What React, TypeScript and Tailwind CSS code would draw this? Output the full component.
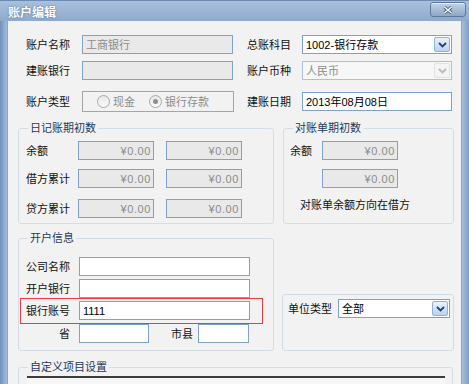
import React from 'react';

const Chevron = ({ color }: { color: string }) => (
  <svg width="9" height="6" viewBox="0 0 9 6">
    <path d="M1 1 L4.5 4.5 L8 1" fill="none" stroke={color} strokeWidth="1.8" />
  </svg>
);

const Field = ({
  w,
  gray,
  right,
  dim,
  children,
}: {
  w: string;
  gray?: boolean;
  right?: boolean;
  dim?: boolean;
  children?: React.ReactNode;
}) => (
  <div
    className={`${w} h-[19px] border border-[#7fa2cd] flex items-center px-[3px] ${
      gray ? 'bg-[#e9e9e9]' : 'bg-white'
    } ${right ? 'justify-end pr-[2px]' : ''} ${dim ? 'text-[#8c8c8c]' : 'text-black'}`}
  >
    {children}
  </div>
);

const Select = ({ w, value, disabled }: { w: string; value: string; disabled?: boolean }) => (
  <div
    className={`${w} h-[19px] border flex items-stretch ${
      disabled ? 'border-[#a9c0de] bg-[#f7f7f7] text-[#8c8c8c]' : 'border-[#7fa2cd] bg-white text-black'
    }`}
  >
    <div className="flex-1 flex items-center pl-[3px]">{value}</div>
    <div
      className={`w-[16px] m-[1px] rounded-[2px] border flex items-center justify-center ${
        disabled
          ? 'border-[#e2e2e2] bg-[#f4f4f4]'
          : 'border-[#8db1e2] bg-gradient-to-b from-[#eaf2fc] to-[#bcd2f1]'
      }`}
    >
      <Chevron color={disabled ? '#b9b9b9' : '#23426f'} />
    </div>
  </div>
);

const Radio = ({ checked, label }: { checked?: boolean; label: string }) => (
  <div className="flex items-center gap-[3px] text-[#8d8d8d]">
    <div className="w-[13px] h-[13px] rounded-full border border-[#a8a8a8] bg-gradient-to-b from-[#e6e6e6] to-[#fbfbfb] flex items-center justify-center">
      {checked && <div className="w-[5px] h-[5px] rounded-full bg-[#8e8e8e]" />}
    </div>
    <span>{label}</span>
  </div>
);

const Legend = ({ children }: { children: React.ReactNode }) => (
  <div className="absolute -top-[8px] left-[9px] px-[2px] bg-[#f2f2f2] leading-[14px] text-[#1e395b]">
    {children}
  </div>
);

const Money = () => <Field w="w-[76px]" gray right dim><span className="tracking-[0.6px]">¥0.00</span></Field>;

const App = () => {
  return (
    <div className="w-[469px] h-[384px] overflow-hidden flex flex-col bg-[#9fb7d5] font-['Liberation_Sans','Noto_Sans_CJK_SC',sans-serif] text-[11px] leading-[14px]">
      {/* title bar */}
      <div className="h-[26px] flex justify-between items-start pl-[8px] pr-[3px] bg-gradient-to-b from-[#a9c0dc] to-[#8eaacd] border-t border-[#6d8bb3]">
        <div className="mt-[5px] text-[12px] leading-[15px] font-bold text-white [text-shadow:0_0_2px_#4a6790]">账户编辑</div>
        <div className="mt-[1px] w-[36px] h-[15px] rounded-[3px] border border-[#5f7899] bg-gradient-to-b from-[#c3d3e6] to-[#8ea7c7] flex items-center justify-center shadow-[inset_0_1px_0_#e2ebf5]">
          <svg width="10" height="8" viewBox="0 0 10 8">
            <path d="M1.5 1 L8.5 7 M8.5 1 L1.5 7" stroke="#3b4f6b" strokeWidth="3" />
            <path d="M1.5 1 L8.5 7 M8.5 1 L1.5 7" stroke="#ffffff" strokeWidth="1.6" />
          </svg>
        </div>
      </div>

      <div className="flex flex-1">
        <div className="w-[8px] bg-gradient-to-r from-[#6f90bd] to-[#a6bedb] border-r border-[#8aa4c6]" />
        <div className="flex-1 bg-[#f2f2f2] pl-[10px] pt-[14px] text-[#111]">
          {/* top fields */}
          <div className="ml-[8px]">
            <div className="flex items-center h-[19px]">
              <div className="w-[56px]">账户名称</div>
              <Field w="w-[151px]" gray dim>工商银行</Field>
              <div className="w-[14px]" />
              <div className="w-[55px]">总账科目</div>
              <Select w="w-[150px]" value="1002-银行存款" />
            </div>
            <div className="flex items-center h-[19px] mt-[7px]">
              <div className="w-[56px]">建账银行</div>
              <Field w="w-[151px]" gray />
              <div className="w-[14px]" />
              <div className="w-[55px]">账户币种</div>
              <Select w="w-[150px]" value="人民币" disabled />
            </div>
            <div className="flex items-center h-[21px] mt-[11px]">
              <div className="w-[56px]">账户类型</div>
              <div className="w-[152px] h-[21px] border border-[#a5a5a5] flex items-center pl-[14px] gap-[14px]">
                <Radio label="现金" />
                <Radio checked label="银行存款" />
              </div>
              <div className="w-[13px]" />
              <div className="w-[55px]">建账日期</div>
              <Field w="w-[150px]">2013年08月08日</Field>
            </div>
          </div>

          {/* opening balances */}
          <div className="flex mt-[16px]">
            <div className="relative w-[256px] h-[96px] border border-[#d3dde7] rounded-[3px] pl-[7px] pt-[12px]">
              <Legend>日记账期初数</Legend>
              <div className="flex items-center h-[19px]">
                <div className="w-[52px]">余额</div>
                <Money />
                <div className="w-[12px]" />
                <Money />
              </div>
              <div className="flex items-center h-[19px] mt-[9px]">
                <div className="w-[52px]">借方累计</div>
                <Money />
                <div className="w-[12px]" />
                <Money />
              </div>
              <div className="flex items-center h-[19px] mt-[11px]">
                <div className="w-[52px]">贷方累计</div>
                <Money />
                <div className="w-[12px]" />
                <Money />
              </div>
            </div>
            <div className="relative ml-[9px] w-[171px] h-[96px] border border-[#d3dde7] rounded-[3px] pl-[6px] pt-[12px]">
              <Legend>对账单期初数</Legend>
              <div className="flex items-center h-[19px]">
                <div className="w-[32px]">余额</div>
                <Money />
              </div>
              <div className="flex items-center h-[19px] mt-[9px]">
                <div className="w-[32px]" />
                <Money />
              </div>
              <div className="mt-[10px] ml-[10px] h-[14px]">对账单余额方向在借方</div>
            </div>
          </div>

          {/* bank info */}
          <div className="flex items-end mt-[14px]">
            <div className="relative w-[256px] h-[113px] border border-[#d3dde7] rounded-[3px] pl-[7px] pt-[18px]">
              <Legend>开户信息</Legend>
              <div className="flex items-center h-[19px]">
                <div className="w-[53px]">公司名称</div>
                <Field w="w-[171px]" />
              </div>
              <div className="flex items-center h-[19px] mt-[3px]">
                <div className="w-[53px]">开户银行</div>
                <Field w="w-[171px]" />
              </div>
              <div className="-ml-[6px] w-[243px] h-[26px] border border-[#f0393b] pl-[5px] pt-[2px]">
                <div className="flex items-center h-[19px]">
                  <div className="w-[53px]">银行账号</div>
                  <Field w="w-[171px]">1111</Field>
                </div>
              </div>
              <div className="flex items-center h-[19px]">
                <div className="w-[53px] text-right pr-[9px]">省</div>
                <Field w="w-[70px]" />
                <div className="w-[22px]" />
                <div className="w-[27px]">市县</div>
                <Field w="w-[51px]" />
              </div>
            </div>
            <div className="ml-[8px] w-[172px] h-[57px] border border-[#d3dde7] rounded-[3px] pl-[5px] pt-[4px]">
              <div className="flex items-center h-[19px]">
                <div className="w-[50px]">单位类型</div>
                <Select w="w-[112px]" value="全部" />
              </div>
            </div>
          </div>

          {/* custom items */}
          <div className="relative mt-[16px] w-[435px] h-[40px] border border-[#d3dde7] rounded-[3px] pl-[8px] pt-[8px]">
            <Legend>自定义项目设置</Legend>
            <div className="w-[418px] h-[30px] border-t-2 border-[#3c3c3c] bg-[#f7f7f7]" />
          </div>
        </div>
        <div className="w-[8px] bg-gradient-to-r from-[#a6bedb] to-[#7f9dc5] border-l border-[#8aa4c6]" />
      </div>
    </div>
  );
};

export default App;
